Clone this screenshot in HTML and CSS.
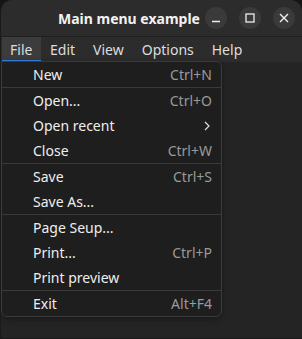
FILE: index.html
```html
<!DOCTYPE html>
<html lang="en">

<head>
    <meta charset="UTF-8">
    <title>Main menu example</title>
    <link rel="stylesheet" href="styles.css">
</head>

<body>

    <div class="window">
        <div class="titlebar">
            <div class="title">Main menu example</div>
            <div class="controls">
                <div class="ctl">
                    <svg width="10" height="10" viewBox="0 0 10 10"><path d="M1 8.5h8" stroke="#eee" stroke-width="1.4"/></svg>
                </div>
                <div class="ctl">
                    <svg width="10" height="10" viewBox="0 0 10 10"><rect x="1" y="1" width="8" height="8" fill="none" stroke="#eee" stroke-width="1.3"/></svg>
                </div>
                <div class="ctl">
                    <svg width="10" height="10" viewBox="0 0 10 10"><path d="M1 1l8 8M9 1l-8 8" stroke="#eee" stroke-width="1.4"/></svg>
                </div>
            </div>
        </div>

        <div class="menubar">
            <div class="menu-item active">File</div>
            <div class="menu-item">Edit</div>
            <div class="menu-item">View</div>
            <div class="menu-item">Options</div>
            <div class="menu-item">Help</div>
        </div>

        <div class="content"></div>

        <!-- File menu popup -->
        <div class="dropdown">
            <div class="row"><span>New</span><span class="key">Ctrl+N</span></div>
            <div class="sep"></div>
            <div class="row"><span>Open...</span><span class="key">Ctrl+O</span></div>
            <div class="row"><span>Open recent</span>
                <svg class="chevron" width="6" height="10" viewBox="0 0 6 10"><path d="M1 1l4 4-4 4" fill="none" stroke="#ddd" stroke-width="1.2"/></svg>
            </div>
            <div class="row"><span>Close</span><span class="key">Ctrl+W</span></div>
            <div class="sep"></div>
            <div class="row"><span>Save</span><span class="key">Ctrl+S</span></div>
            <div class="row"><span>Save As...</span></div>
            <div class="sep"></div>
            <div class="row"><span>Page Seup...</span></div>
            <div class="row"><span>Print...</span><span class="key">Ctrl+P</span></div>
            <div class="row"><span>Print preview</span></div>
            <div class="sep"></div>
            <div class="row"><span>Exit</span><span class="key">Alt+F4</span></div>
        </div>
    </div>

</body>

</html>
```

FILE: styles.css
```css
:root {
    --title-bg: #2c2c2c;
    --window-bg: #242424;
    --popup-bg: #1e1e1e;
    --line: #3a3a3a;
    --text: #eeeeee;
    --dim: #9a9a9a;
    --accent: #3584e4;
}

body {
    margin: 0;
    background-color: #161616;
    font-family: 'Noto Sans', 'Open Sans', sans-serif;
    font-size: 14px;
    color: var(--text);
}

.window {
    position: relative;
    height: 339px;
    box-sizing: border-box;
    display: flex;
    flex-direction: column;
    background-color: var(--window-bg);
    border-radius: 12px 12px 0 0;
    border-left: 1px solid #1a1a1a;
    border-bottom: 1px solid #1a1a1a;
    overflow: hidden;
}

.titlebar {
    height: 37px;
    flex: none;
    display: flex;
    align-items: center;
    background-color: var(--title-bg);
    border-bottom: 1px solid #1f1f1f;
    box-sizing: border-box;
}

.title {
    flex: 1;
    padding-left: 57px;
    font-weight: bold;
    font-size: 14px;
    color: #f2f2f2;
}

.controls {
    display: flex;
    gap: 12px;
    padding-right: 7px;
}

.ctl {
    width: 22px;
    height: 22px;
    border-radius: 50%;
    background-color: #3a3a3a;
    display: flex;
    align-items: center;
    justify-content: center;
}

.menubar {
    height: 25px;
    flex: none;
    display: flex;
    padding-left: 1px;
    background-color: var(--title-bg);
}

.menu-item {
    padding: 0 9px;
    line-height: 25px;
    color: #dddddd;
    box-sizing: border-box;
}

.menu-item.active {
    background-color: #3c3c3c;
    box-shadow: inset 0 -2px 0 var(--accent);
    padding: 0 8px;
    width: 39px;
}

.content {
    flex: 1;
}

.dropdown {
    position: absolute;
    left: 0;
    top: 61px;
    width: 221px;
    box-sizing: border-box;
    background-color: var(--popup-bg);
    border: 1px solid var(--line);
    border-radius: 0 6px 6px 6px;
    box-shadow: 0 2px 6px rgba(0, 0, 0, 0.35);
}

.row {
    height: 25px;
    display: flex;
    align-items: center;
    justify-content: space-between;
    padding: 0 9px 0 31px;
}

.key {
    color: var(--dim);
}

.chevron {
    margin-right: 2px;
}

.sep {
    height: 1px;
    background-color: var(--line);
}
```
